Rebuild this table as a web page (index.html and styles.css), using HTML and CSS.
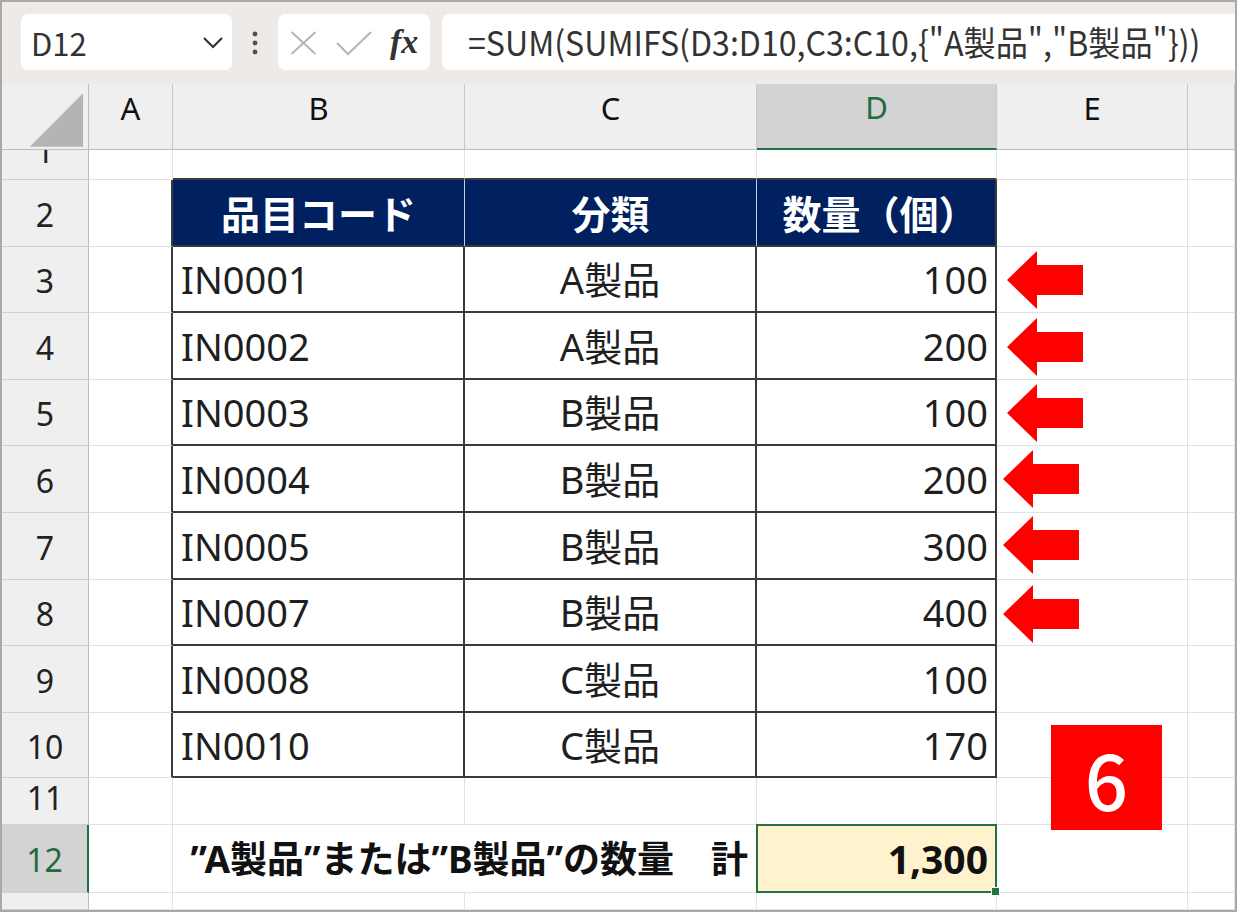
FILE: index.html
```html
<!DOCTYPE html>
<html lang="ja">
<head>
<meta charset="utf-8">
<title>SUMIFS</title>
<link rel="stylesheet" href="styles.css">
</head>
<body>
<div class="frame">
  <div class="toolbar">
    <div class="namebox">
      <span class="cellref">D12</span>
      <svg class="chev" width="22" height="14" viewBox="0 0 22 14"><polyline points="2,2 11,11 20,2" fill="none" stroke="#333" stroke-width="2.2"/></svg>
    </div>
    <div class="dots">
      <svg width="8" height="26" viewBox="0 0 8 26"><circle cx="4" cy="4" r="2.4" fill="#505050"/><circle cx="4" cy="13" r="2.4" fill="#505050"/><circle cx="4" cy="22" r="2.4" fill="#505050"/></svg>
    </div>
    <div class="fxbox">
      <svg class="xicon" width="27" height="24" viewBox="0 0 27 24"><path d="M1.5 1 L25.5 23 M25.5 1 L1.5 23" stroke="#b5b5b5" stroke-width="2" fill="none"/></svg>
      <svg class="check" width="36" height="25" viewBox="0 0 36 25"><polyline points="1,12 12,23 35,1" fill="none" stroke="#b5b5b5" stroke-width="2"/></svg>
      <span class="fx">fx</span>
    </div>
    <div class="formula"><span class="ftext">=SUM(SUMIFS(D3:D10,C3:C10,{"A製品","B製品"}))</span></div>
  </div>

  <div class="sheet">
    <!-- column headers -->
    <div class="c corner"><svg width="87" height="66" viewBox="0 0 87 66"><polygon points="82,9 82,63 28,63" fill="#b4b4b4"/></svg></div>
    <div class="c hd">A</div>
    <div class="c hd">B</div>
    <div class="c hd">C</div>
    <div class="c hd sel">D</div>
    <div class="c hd">E</div>
    <div class="c hd"></div>

    <!-- row 1 -->
    <div class="c rh r1"><span>1</span></div>
    <div class="c"></div>
    <div class="c tt"></div>
    <div class="c tt"></div>
    <div class="c tt"></div>
    <div class="c"></div>
    <div class="c"></div>

    <!-- row 2 -->
    <div class="c rh">2</div>
    <div class="c tl"></div>
    <div class="c th">品目コード</div>
    <div class="c th">分類</div>
    <div class="c th last">数量（個）</div>
    <div class="c"></div>
    <div class="c"></div>

    <!-- row 3 -->
    <div class="c rh">3</div>
    <div class="c tl"></div>
    <div class="c td l">IN0001</div>
    <div class="c td m">A製品</div>
    <div class="c td r">100</div>
    <div class="c"></div>
    <div class="c"></div>

    <!-- row 4 -->
    <div class="c rh">4</div>
    <div class="c tl"></div>
    <div class="c td l">IN0002</div>
    <div class="c td m">A製品</div>
    <div class="c td r">200</div>
    <div class="c"></div>
    <div class="c"></div>

    <!-- row 5 -->
    <div class="c rh">5</div>
    <div class="c tl"></div>
    <div class="c td l">IN0003</div>
    <div class="c td m">B製品</div>
    <div class="c td r">100</div>
    <div class="c"></div>
    <div class="c"></div>

    <!-- row 6 -->
    <div class="c rh">6</div>
    <div class="c tl"></div>
    <div class="c td l">IN0004</div>
    <div class="c td m">B製品</div>
    <div class="c td r">200</div>
    <div class="c"></div>
    <div class="c"></div>

    <!-- row 7 -->
    <div class="c rh">7</div>
    <div class="c tl"></div>
    <div class="c td l">IN0005</div>
    <div class="c td m">B製品</div>
    <div class="c td r">300</div>
    <div class="c"></div>
    <div class="c"></div>

    <!-- row 8 -->
    <div class="c rh">8</div>
    <div class="c tl"></div>
    <div class="c td l">IN0007</div>
    <div class="c td m">B製品</div>
    <div class="c td r">400</div>
    <div class="c"></div>
    <div class="c"></div>

    <!-- row 9 -->
    <div class="c rh">9</div>
    <div class="c tl"></div>
    <div class="c td l">IN0008</div>
    <div class="c td m">C製品</div>
    <div class="c td r">100</div>
    <div class="c"></div>
    <div class="c"></div>

    <!-- row 10 -->
    <div class="c rh">10</div>
    <div class="c tl"></div>
    <div class="c td l">IN0010</div>
    <div class="c td m">C製品</div>
    <div class="c td r">170</div>
    <div class="c"></div>
    <div class="c"></div>

    <!-- row 11 -->
    <div class="c rh r11">11</div>
    <div class="c"></div>
    <div class="c"></div>
    <div class="c"></div>
    <div class="c"></div>
    <div class="c"></div>
    <div class="c"></div>

    <!-- row 12 -->
    <div class="c rh sel">12</div>
    <div class="c"></div>
    <div class="c sumlabel">”A製品”または”B製品”の数量　計</div>
    <div class="c total">1,300</div>
    <div class="c"></div>
    <div class="c"></div>

    <!-- row 13 -->
    <div class="c rh"></div>
    <div class="c"></div>
    <div class="c"></div>
    <div class="c"></div>
    <div class="c"></div>
    <div class="c"></div>
    <div class="c"></div>
  </div>

  <svg class="arrows" width="1240" height="913" viewBox="0 0 1240 913">
    <defs>
      <polygon id="arr" points="0,29 30,0 30,14 76,14 76,44 30,44 30,58" fill="#ff0000"/>
    </defs>
    <use href="#arr" x="1007" y="251"/>
    <use href="#arr" x="1007" y="318"/>
    <use href="#arr" x="1007" y="384"/>
    <use href="#arr" x="1003" y="450"/>
    <use href="#arr" x="1003" y="516"/>
    <use href="#arr" x="1003" y="585"/>
  </svg>

  <div class="badge">6</div>
</div>
</body>
</html>
```

FILE: styles.css
```css
html, body {
  margin: 0;
  padding: 0;
  background: #ffffff;
}

.frame {
  position: relative;
  width: 1237px;
  height: 912px;
  box-sizing: border-box;
  border: 2px solid #a9a9a9;
  font-family: "Noto Sans", "Noto Sans CJK JP", sans-serif;
  overflow: hidden;
}

/* ---------- formula bar ---------- */
.toolbar {
  height: 82px;
  box-sizing: border-box;
  background: #eeeae8;
  display: flex;
  align-items: flex-start;
  padding: 12px 0 0 19px;
}

.namebox {
  width: 211px;
  height: 56px;
  box-sizing: border-box;
  background: #ffffff;
  border-radius: 7px;
  display: flex;
  align-items: center;
  justify-content: space-between;
  padding: 0 8px 0 10px;
}

.cellref {
  font-family: "Noto Sans CJK JP", "Noto Sans", sans-serif;
  font-size: 31px;
  color: #333;
  line-height: 1;
}

.chev {
  display: block;
  margin-top: 2px;
}

.dots {
  width: 46px;
  height: 56px;
  display: flex;
  align-items: center;
  justify-content: center;
}

.dots svg {
  display: block;
  margin-top: 2px;
}

.fxbox {
  width: 152px;
  height: 56px;
  box-sizing: border-box;
  background: #ffffff;
  border-radius: 7px;
  display: flex;
  align-items: center;
  padding-left: 12px;
}

.xicon {
  display: block;
  margin-top: 2px;
}

.check {
  display: block;
  margin-left: 19px;
  margin-top: 2px;
}

.fx {
  margin-left: 18px;
  font-family: "Liberation Serif", "DejaVu Serif", serif;
  font-style: italic;
  font-weight: 700;
  font-size: 34px;
  color: #333;
  line-height: 1;
}

.formula {
  flex: 1;
  height: 56px;
  margin-left: 12px;
  background: #ffffff;
  border-radius: 7px 0 0 7px;
  display: flex;
  align-items: center;
  padding-left: 26px;
  overflow: hidden;
}

.ftext {
  display: inline-block;
  font-family: "Noto Sans CJK JP", "Noto Sans", sans-serif;
  font-size: 34px;
  color: #333;
  white-space: nowrap;
  line-height: 1;
  transform: scaleX(0.945);
  transform-origin: left center;
}

/* ---------- sheet grid ---------- */
.sheet {
  display: grid;
  grid-template-columns: 87px 84px 292px 292px 240px 191px 47px;
  grid-template-rows: 66px 30px 67px 66px 67px 66px 67px 67px 66px 67px 65px 47px 68px 17px;
}

.c {
  box-sizing: border-box;
  border-right: 1px solid #e2e2e2;
  border-bottom: 1px solid #e2e2e2;
  display: flex;
  align-items: center;
  overflow: hidden;
  min-width: 0;
  font-size: 38px;
  line-height: 1;
  color: #1f1f1f;
  white-space: nowrap;
}

.corner {
  background: #efefef;
  border-right-color: #bdbdbd;
  border-bottom-color: #bdbdbd;
}

.corner svg {
  display: block;
}

.hd {
  background: #efefef;
  border-right-color: #c9c9c9;
  border-bottom-color: #bdbdbd;
  justify-content: center;
  padding-bottom: 17px;
  font-size: 31px;
  color: #111;
}

.hd.sel {
  background: #d3d3d3;
  color: #1e6c41;
  border-bottom: 2px solid #217346;
}

.rh {
  background: #efefef;
  border-right-color: #bdbdbd;
  border-bottom-color: #d0d0d0;
  justify-content: center;
  font-size: 32px;
  color: #222;
  padding-top: 3px;
}

.rh.sel {
  background: #d3d3d3;
  color: #1e6c41;
  border-right: 2px solid #217346;
}

.rh.r11 {
  padding-top: 0;
  padding-bottom: 6px;
}

.rh.r1 {
  align-items: flex-start;
  padding-top: 0;
}

.rh.r1 span {
  display: block;
  height: 66px;
  line-height: 66px;
  margin-top: -32px;
}

/* table edges */
.tt {
  border-bottom: 2px solid #3a3a3a;
}

.tl {
  border-right: 2px solid #3a3a3a;
}

.th {
  background: #002060;
  color: #ffffff;
  font-family: "Noto Sans CJK JP", "Noto Sans", sans-serif;
  font-weight: 700;
  font-size: 39px;
  justify-content: center;
  border-right: 1px solid #c5cbd8;
  border-bottom: 2px solid #3a3a3a;
}

.th.last {
  border-right: 2px solid #3a3a3a;
  padding-left: 8px;
}

.td {
  border-right: 2px solid #3a3a3a;
  border-bottom: 2px solid #3a3a3a;
}

.td.l {
  padding-left: 8px;
}

.td.m {
  justify-content: center;
}

.td.r {
  justify-content: flex-end;
  padding-right: 7px;
}

.sumlabel {
  grid-column: span 2;
  justify-content: flex-end;
  padding-right: 8px;
  font-weight: 700;
  font-size: 37px;
  color: #111;
}

.total {
  position: relative;
  overflow: visible;
  background: #fff2cc;
  justify-content: flex-end;
  padding-right: 8px;
  font-weight: 700;
  font-size: 39px;
  color: #111;
}

.total::after {
  content: "";
  position: absolute;
  left: -1px;
  top: -1px;
  right: -1px;
  bottom: -1px;
  border: 2px solid #217346;
}

.total::before {
  content: "";
  position: absolute;
  right: -4px;
  bottom: -4px;
  width: 7px;
  height: 7px;
  background: #217346;
  border: 1px solid #ffffff;
  z-index: 2;
}

/* overlays */
.arrows {
  position: absolute;
  left: -2px;
  top: -2px;
  pointer-events: none;
}

.badge {
  position: absolute;
  left: 1049px;
  top: 723px;
  width: 111px;
  height: 105px;
  background: #ff0000;
  color: #ffffff;
  display: flex;
  align-items: center;
  justify-content: center;
  font-family: "Noto Sans CJK JP", "Noto Sans", sans-serif;
  font-weight: 500;
  font-size: 76px;
  line-height: 1;
}
```
